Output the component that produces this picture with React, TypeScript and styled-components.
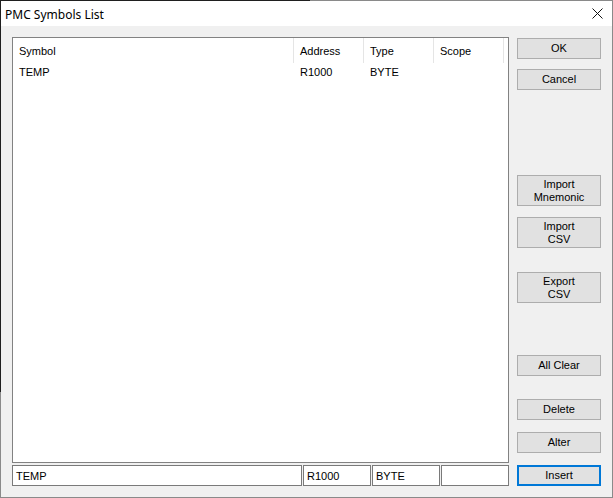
import React from "react";
import styled, { createGlobalStyle } from "styled-components";

const Global = createGlobalStyle`
  html, body { margin: 0; padding: 0; background: #ffffff; }
  * { box-sizing: border-box; }
`;

const Frame = styled.div`
  width: 613px;
  height: 498px;
  padding: 1px;
  background: linear-gradient(#1f1f1f, #1f1f1f) no-repeat 0 0 / 310px 392px, #8a8a8a;
  display: flex;
  flex-direction: column;
`;

const TitleBar = styled.div`
  height: 25px;
  background: #ffffff;
  display: flex;
  align-items: center;
  justify-content: space-between;
  padding: 0 9px 0 4px;
  font-family: "Noto Sans", "Open Sans", sans-serif;
  font-size: 12px;
  color: #000;
`;

const Title = styled.span`
  padding-top: 1px;
`;

const Body = styled.div`
  flex: 1;
  background: #f0f0f0;
  display: flex;
  gap: 8px;
  padding: 11px 11px 0 11px;
  font-family: "Liberation Sans", Arial, sans-serif;
  font-size: 11px;
  color: #000;
`;

const LeftCol = styled.div`
  width: 497px;
  display: flex;
  flex-direction: column;
  gap: 2px;
`;

const ListBox = styled.div`
  height: 426px;
  background: #fff;
  border: 1px solid #828282;
`;

const Row = styled.div<{ $header?: boolean }>`
  display: grid;
  grid-template-columns: 281px 70px 70px 70px;
  height: ${(p) => (p.$header ? "25px" : "17px")};
  align-items: stretch;
`;

const Cell = styled.div<{ $header?: boolean }>`
  display: flex;
  align-items: center;
  padding-left: 6px;
  border-right: ${(p) => (p.$header ? "1px solid #e5e5e5" : "none")};
  white-space: nowrap;
`;

const EditRow = styled.div`
  display: grid;
  grid-template-columns: 290px 68px 68px 68px;
  gap: 1px;
`;

const Edit = styled.div`
  height: 21px;
  background: #fff;
  border: 1px solid #7a7a7a;
  display: flex;
  align-items: center;
  padding-left: 3px;
  padding-top: 1px;
  white-space: nowrap;
`;

const RightCol = styled.div`
  width: 84px;
  display: flex;
  flex-direction: column;
  padding-top: 1px;
`;

const Button = styled.div<{ $mt: number; $tall?: boolean; $default?: boolean }>`
  margin-top: ${(p) => p.$mt}px;
  height: ${(p) => (p.$tall ? 31 : 21)}px;
  background: #e1e1e1;
  border: ${(p) => (p.$default ? "2px solid #0078d7" : "1px solid #adadad")};
  display: flex;
  flex-direction: column;
  align-items: center;
  justify-content: center;
  text-align: center;
  line-height: 13px;
`;

const Close = () => (
  <svg width="11" height="11" viewBox="0 0 11 11">
    <path d="M0.5 0.5 L10.5 10.5 M10.5 0.5 L0.5 10.5" stroke="#111" strokeWidth="1" fill="none" />
  </svg>
);

const buttons: { label: string[]; mt: number; tall?: boolean; def?: boolean }[] = [
  { label: ["OK"], mt: 0 },
  { label: ["Cancel"], mt: 10 },
  { label: ["Import", "Mnemonic"], mt: 85, tall: true },
  { label: ["Import", "CSV"], mt: 11, tall: true },
  { label: ["Export", "CSV"], mt: 24, tall: true },
  { label: ["All Clear"], mt: 52 },
  { label: ["Delete"], mt: 23 },
  { label: ["Alter"], mt: 12 },
  { label: ["Insert"], mt: 12, def: true },
];

export default function App() {
  return (
    <>
      <Global />
      <Frame>
        <TitleBar>
          <Title>PMC Symbols List</Title>
          <Close />
        </TitleBar>
        <Body>
          <LeftCol>
            <ListBox>
              <Row $header>
                <Cell $header>Symbol</Cell>
                <Cell $header>Address</Cell>
                <Cell $header>Type</Cell>
                <Cell $header>Scope</Cell>
              </Row>
              <Row>
                <Cell>TEMP</Cell>
                <Cell>R1000</Cell>
                <Cell>BYTE</Cell>
                <Cell></Cell>
              </Row>
            </ListBox>
            <EditRow>
              <Edit>TEMP</Edit>
              <Edit>R1000</Edit>
              <Edit>BYTE</Edit>
              <Edit></Edit>
            </EditRow>
          </LeftCol>
          <RightCol>
            {buttons.map((b) => (
              <Button key={b.label.join(" ")} $mt={b.mt} $tall={b.tall} $default={b.def}>
                {b.label.map((l) => (
                  <span key={l}>{l}</span>
                ))}
              </Button>
            ))}
          </RightCol>
        </Body>
      </Frame>
    </>
  );
}
